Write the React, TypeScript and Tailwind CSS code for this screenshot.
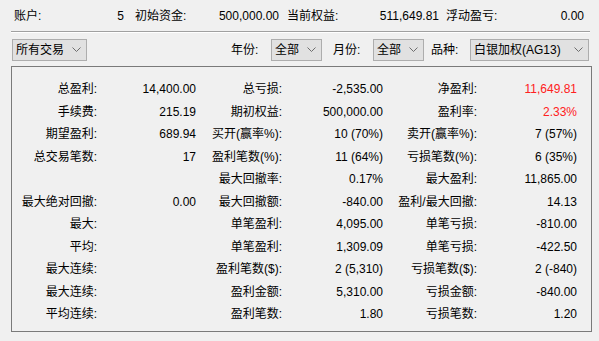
import React from "react";

const font = { fontFamily: '"Liberation Sans", "Noto Sans CJK SC", sans-serif' };

function Chevron() {
  return (
    <svg width="9" height="6" viewBox="0 0 9 6" className="shrink-0">
      <path d="M0.5 0.5 L4.5 4.5 L8.5 0.5" fill="none" stroke="#6d6d6d" strokeWidth="1" />
    </svg>
  );
}

function Select({ text, w }: { text: string; w: string }) {
  return (
    <div className={`${w} h-[22px] shrink-0 flex items-center justify-between pl-[3px] pr-[5px] border border-[#adadad] bg-[#e1e1e1] text-[12px] text-black`}>
      <span className="leading-none">{text}</span>
      <Chevron />
    </div>
  );
}

type Row = [string, string, string, string, string, string, boolean?];

const rows: Row[] = [
  ["总盈利:", "14,400.00", "总亏损:", "-2,535.00", "净盈利:", "11,649.81", true],
  ["手续费:", "215.19", "期初权益:", "500,000.00", "盈利率:", "2.33%", true],
  ["期望盈利:", "689.94", "买开(赢率%):", "10 (70%)", "卖开(赢率%):", "7 (57%)"],
  ["总交易笔数:", "17", "盈利笔数(%):", "11 (64%)", "亏损笔数(%):", "6 (35%)"],
  ["", "", "最大回撤率:", "0.17%", "最大盈利:", "11,865.00"],
  ["最大绝对回撤:", "0.00", "最大回撤额:", "-840.00", "盈利/最大回撤:", "14.13"],
  ["最大:", "", "单笔盈利:", "4,095.00", "单笔亏损:", "-810.00"],
  ["平均:", "", "单笔盈利:", "1,309.09", "单笔亏损:", "-422.50"],
  ["最大连续:", "", "盈利笔数($):", "2 (5,310)", "亏损笔数($):", "2 (-840)"],
  ["最大连续:", "", "盈利金额:", "5,310.00", "亏损金额:", "-840.00"],
  ["平均连续:", "", "盈利笔数:", "1.80", "亏损笔数:", "1.20"],
];

export default function App() {
  return (
    <div className="w-[599px] h-[341px] bg-[#f0f0f0] text-black text-[12px] overflow-hidden" style={font}>
      {/* top summary */}
      <div className="h-[31px] flex items-center pl-[14px]">
        <div className="w-[110px] flex justify-between"><span>账户:</span><span>5</span></div>
        <div className="w-[144px] ml-[11px] flex justify-between"><span>初始资金:</span><span>500,000.00</span></div>
        <div className="w-[152px] ml-[8px] flex justify-between"><span>当前权益:</span><span>511,649.81</span></div>
        <div className="w-[138px] ml-[7px] flex justify-between"><span>浮动盈亏:</span><span>0.00</span></div>
      </div>
      <div className="mx-[11px] w-[579px] h-px bg-[#a0a0a0]" />
      <div className="mx-[11px] w-[579px] h-px bg-white" />
      {/* toolbar */}
      <div className="mt-[6px] h-[22px] flex items-center pl-[12px]">
        <Select text="所有交易" w="w-[75px]" />
        <span className="ml-[144px] w-[40px] shrink-0">年份:</span>
        <Select text="全部" w="w-[51px]" />
        <span className="ml-[11px] w-[40px] shrink-0">月份:</span>
        <Select text="全部" w="w-[51px]" />
        <span className="ml-[6px] w-[40px] shrink-0 pl-[1px]">品种:</span>
        <Select text="白银加权(AG13)" w="w-[119px]" />
      </div>
      {/* panel */}
      <div className="mt-[5px] ml-[11px] w-[581px] h-[266px] border border-[#7a7a7a] pt-[11px]">
        <div className="grid grid-cols-[85px_99px_86px_101px_94px_100px] auto-rows-[22.5px]">
          {rows.map((r, i) => (
            <React.Fragment key={i}>
              <div className="flex items-center justify-end">{r[0]}</div>
              <div className="flex items-center justify-end">{r[1]}</div>
              <div className="flex items-center justify-end">{r[2]}</div>
              <div className="flex items-center justify-end">{r[3]}</div>
              <div className="flex items-center justify-end">{r[4]}</div>
              <div className={`flex items-center justify-end ${r[6] ? "text-[#ff2020]" : ""}`}>{r[5]}</div>
            </React.Fragment>
          ))}
        </div>
      </div>
    </div>
  );
}
